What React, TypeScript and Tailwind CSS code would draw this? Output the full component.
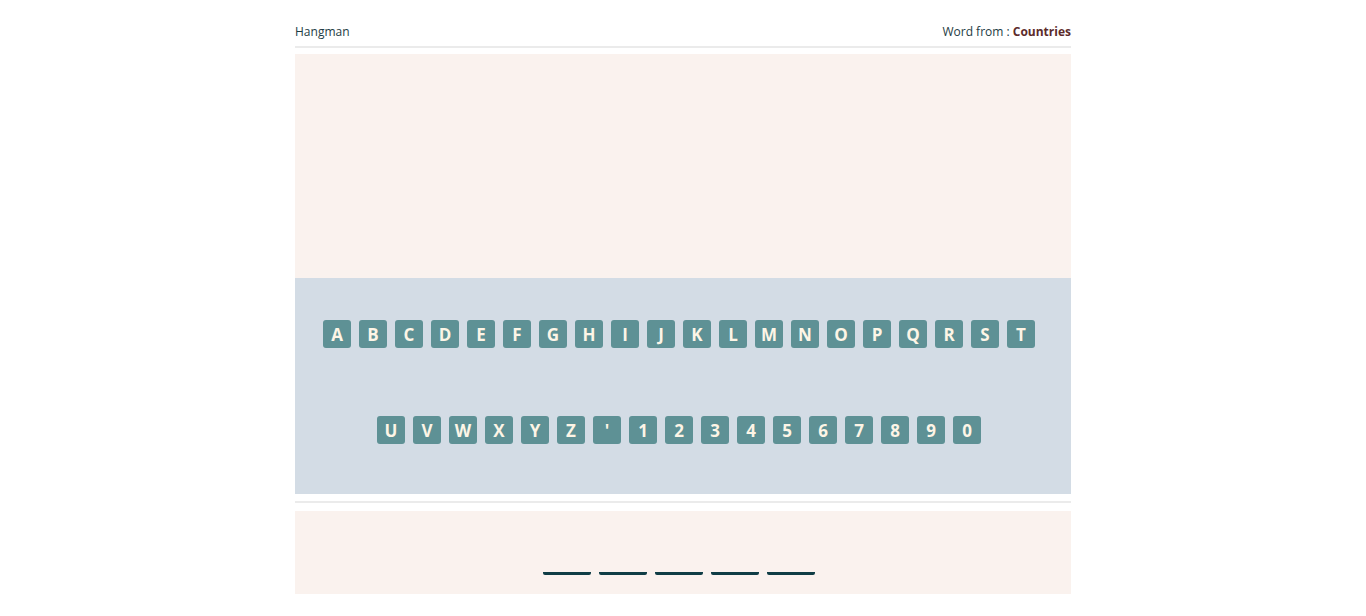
const row1 = "ABCDEFGHIJKLMNOPQRST".split("");
const row2 = ["U", "V", "W", "X", "Y", "Z", "'", "1", "2", "3", "4", "5", "6", "7", "8", "9", "0"];

function Key({ label }: { label: string }) {
  return (
    <button className="mx-1 w-7 h-7 rounded-[3px] bg-[#5e9195] text-[#fdf5e6] font-bold text-[17px] leading-none flex items-center justify-center">
      {label}
    </button>
  );
}

export default function App() {
  return (
    <div className="w-full bg-white font-['Open_Sans',sans-serif]">
      <div className="w-[776px] mx-auto pt-[24px]">
        {/* Header */}
        <div className="flex justify-between items-center text-[12px] leading-4 text-[#1d3c44] pb-[6px] border-b-2 border-[#ebebeb]">
          <span>Hangman</span>
          <span>
            Word from : <b className="text-[#5c2b2b]">Countries</b>
          </span>
        </div>

        {/* Drawing area */}
        <div className="mt-[6px] h-[224px] bg-[#faf2ee]" />

        {/* Keyboard */}
        <div className="h-[216px] bg-[#d3dce5] pt-[42px] pr-2 flex flex-col items-center gap-[68px]">
          <div className="flex">
            {row1.map((l) => (
              <Key key={l} label={l} />
            ))}
          </div>
          <div className="flex">
            {row2.map((l) => (
              <Key key={l} label={l} />
            ))}
          </div>
        </div>

        <div className="mt-[7px] h-[2px] bg-[#ebebeb]" />

        {/* Word */}
        <div className="mt-[8px] h-[83px] bg-[#faf2ee] pt-[61px] pr-2 flex justify-center gap-2">
          {[0, 1, 2, 3, 4].map((i) => (
            <div key={i} className="w-12 h-[3px] rounded-b-[2px] bg-[#0f3d45]" />
          ))}
        </div>
      </div>
    </div>
  );
}
